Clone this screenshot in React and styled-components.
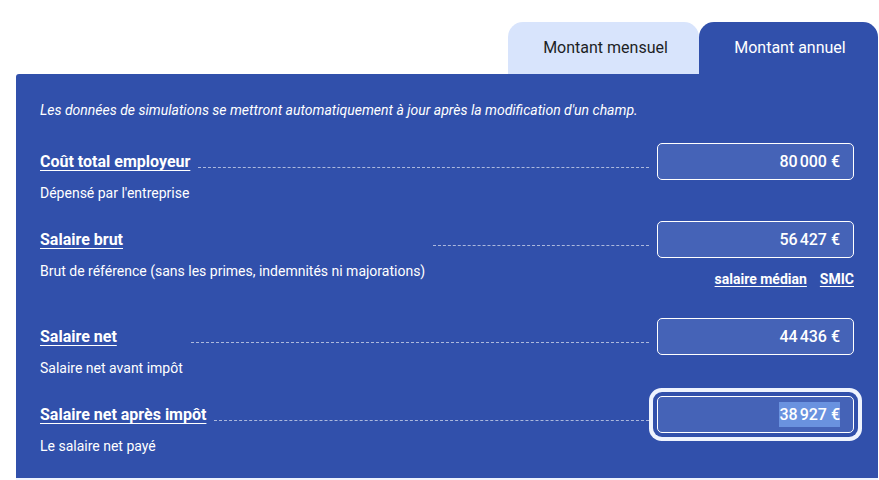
import styled, { createGlobalStyle } from "styled-components";

const GlobalStyle = createGlobalStyle`
  body {
    margin: 0;
    background: #ffffff;
    font-family: Roboto, "Liberation Sans", sans-serif;
  }
`;

const Page = styled.div`
  padding: 22px 1px 0 16px;
  height: 480px;
  box-sizing: border-box;
  overflow: hidden;
`;

const Tabs = styled.div`
  display: flex;
  justify-content: flex-end;
`;

const Tab = styled.button`
  height: 52px;
  width: ${(p) => p.$width}px;
  border: none;
  border-radius: 15px 15px 0 0;
  background: ${(p) => (p.$active ? "#3150ab" : "#d8e4fc")};
  color: ${(p) => (p.$active ? "#ffffff" : "#1d1f25")};
  font-family: Roboto, "Liberation Sans", sans-serif;
  font-size: 16px;
  padding: 0 0 2px ${(p) => (p.$active ? 3 : 4)}px;
  cursor: pointer;
`;

const Panel = styled.section`
  background: #3150ab;
  border-radius: 3px 0 0 0;
  padding: 28px 24px 23px;
  color: #ffffff;
  box-shadow: 0 3px 0 #eef3fe;
`;

const Intro = styled.p`
  margin: 0 0 24px;
  font-size: 14px;
  font-style: italic;
  line-height: 17px;
`;

const Row = styled.div`
  display: flex;
  align-items: flex-start;
  margin-bottom: ${(p) => p.$gap}px;
  &:last-child {
    margin-bottom: 0;
  }
`;

const LabelCol = styled.div`
  display: flex;
  flex-direction: column;
`;

const Label = styled.a`
  font-size: 16px;
  font-weight: 700;
  line-height: 37px;
  height: 37px;
  color: #ffffff;
  text-decoration: underline;
  text-decoration-thickness: 1px;
  text-underline-offset: 3px;
`;

const Description = styled.span`
  margin-top: 5px;
  font-size: 14px;
  line-height: 17px;
`;

const Dots = styled.div`
  flex: 1;
  height: 24px;
  margin: 0 8px;
  border-bottom: 1px dashed rgba(255, 255, 255, 0.6);
`;

const FieldCol = styled.div`
  display: flex;
  flex-direction: column;
  align-items: flex-end;
`;

const Field = styled.div`
  width: 197px;
  height: 37px;
  box-sizing: border-box;
  border: 1px solid #ffffff;
  border-radius: 5px;
  background: #4563b7;
  display: flex;
  align-items: center;
  justify-content: flex-end;
  padding-right: 13px;
  font-size: 16px;
  font-weight: 500;
  color: #ffffff;
  box-shadow: ${(p) =>
    p.$focused ? "0 0 0 4px #3150ab, 0 0 0 8px #eef3fe" : "none"};
`;

const Selected = styled.span`
  background: #6a92df;
  line-height: 25px;
`;

const Links = styled.div`
  display: flex;
  gap: 13px;
  margin-top: 13px;
`;

const QuickLink = styled.a`
  font-size: 14px;
  font-weight: 700;
  line-height: 17px;
  color: #ffffff;
  text-decoration: underline;
  text-underline-offset: 2px;
`;

const rows = [
  { label: "Coût total employeur", desc: "Dépensé par l'entreprise", value: "80\u202f000\u00a0€", gap: 19 },
  {
    label: "Salaire brut",
    desc: "Brut de référence (sans les primes, indemnités ni majorations)",
    value: "56\u202f427\u00a0€",
    links: true,
    gap: 30,
  },
  { label: "Salaire net", desc: "Salaire net avant impôt", value: "44\u202f436\u00a0€", gap: 19 },
  { label: "Salaire net après impôt", desc: "Le salaire net payé", value: "38\u202f927\u00a0€", focused: true },
];

export default function App() {
  return (
    <>
      <GlobalStyle />
      <Page>
        <Tabs>
          <Tab $width={191}>Montant mensuel</Tab>
          <Tab $width={179} $active>
            Montant annuel
          </Tab>
        </Tabs>
        <Panel>
          <Intro>
            Les données de simulations se mettront automatiquement à jour après la modification d'un champ.
          </Intro>
          {rows.map((r) => (
            <Row key={r.label} $gap={r.gap || 0}>
              <LabelCol>
                <Label>{r.label}</Label>
                <Description>{r.desc}</Description>
              </LabelCol>
              <Dots />
              <FieldCol>
                <Field $focused={r.focused}>
                  {r.focused ? <Selected>{r.value}</Selected> : r.value}
                </Field>
                {r.links && (
                  <Links>
                    <QuickLink>salaire médian</QuickLink>
                    <QuickLink>SMIC</QuickLink>
                  </Links>
                )}
              </FieldCol>
            </Row>
          ))}
        </Panel>
      </Page>
    </>
  );
}
